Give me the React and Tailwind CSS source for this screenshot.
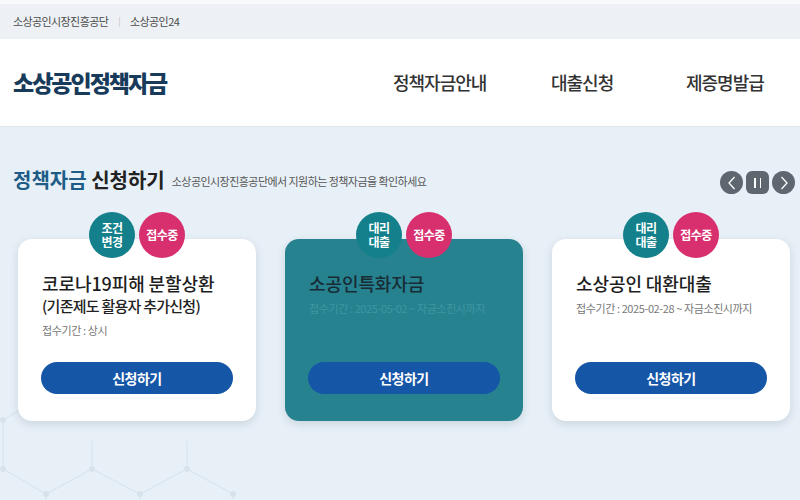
import React from "react";

const F = { fontFamily: "'Noto Sans CJK KR', 'Noto Sans', sans-serif" };

function Badges({ first }) {
  return (
    <div className="relative z-10 flex h-[46px] gap-[4px]">
      <div className="flex h-[46px] w-[46px] flex-col items-center justify-center rounded-full bg-[#13808b] text-[12px] font-bold leading-[14px] tracking-[-0.5px] text-white">
        <span>{first[0]}</span>
        <span>{first[1]}</span>
      </div>
      <div className="flex h-[46px] w-[46px] items-center justify-center rounded-full bg-[#d8306f] text-[12px] font-bold tracking-[-0.5px] text-white">
        접수중
      </div>
    </div>
  );
}

function Card({ badge, dark, title, sub, date }) {
  return (
    <div className="flex w-[238px] flex-col items-center">
      <Badges first={badge} />
      <div
        className={
          "-mt-[19px] flex h-[182px] w-[238px] flex-col rounded-[14px] px-[23px] pt-[32px] pb-[27px] shadow-[0_3px_10px_rgba(40,70,100,0.16)] " +
          (dark ? "bg-[#26828f]" : "bg-white")
        }
      >
        <div
          className={
            "pl-[1px] text-[18px] font-medium leading-[24px] tracking-[-0.1px] " +
            (dark ? "text-[#182c36]" : "text-[#1e1e1e]")
          }
        >
          {title}
        </div>
        {sub && (
          <div className="pl-[1px] text-[15px] font-medium leading-[22px] tracking-[-0.75px] text-[#222]">
            {sub}
          </div>
        )}
        <div
          className={
            "mt-[3px] pl-[1px] text-[11px] leading-[20px] tracking-[-0.4px] " +
            (dark ? "text-[#3d97a3]" : "text-[#777]")
          }
        >
          {date}
        </div>
        <div className="mt-auto flex h-[32px] w-full items-center justify-center rounded-full bg-[#1556a6] text-[14px] font-bold tracking-[-0.5px] text-white">
          신청하기
        </div>
      </div>
    </div>
  );
}

export default function App() {
  return (
    <div style={F} className="relative h-[500px] w-[800px] overflow-hidden bg-[#e8f0f7]">
      <div className="h-[4px] bg-[#f7f9fa]" />
      <div className="flex h-[35px] items-center bg-[#edf1f5] pl-[13px] text-[11px] tracking-[-0.6px] text-[#4a4a4a]">
        <span>소상공인시장진흥공단</span>
        <span className="mx-[10px] text-[9px] text-[#c4c4c4]">|</span>
        <span>소상공인24</span>
      </div>
      <div className="flex h-[88px] items-center border-b border-[#dfe4e8] bg-white pl-[13px]">
        <div className="text-[23px] font-black tracking-[-2px] text-[#183b5c]">소상공인정책자금</div>
        <nav className="ml-auto flex text-[18px] font-medium tracking-[-1px] text-[#333]">
          <span className="w-[158px]">정책자금안내</span>
          <span className="w-[135px]">대출신청</span>
          <span className="w-[114px]">제증명발급</span>
        </nav>
      </div>

      <div className="relative">
        <svg className="absolute left-0 top-0" width="800" height="373" viewBox="0 127 800 373">
          <g stroke="#d9e5ee" strokeWidth="1.2" fill="none">
            <path d="M3 379 L60 345 M3 379 L3 428 L46 453 L92 428 L140 453 L187 428 L233 453 M46 453 L46 500 M140 453 L140 500 M233 453 L233 500 M92 428 L92 400 M187 428 L187 400" />
          </g>
          <g fill="#d6e3ec">
            <circle cx="3" cy="379" r="3" />
            <circle cx="3" cy="428" r="3" />
            <circle cx="92" cy="428" r="3" />
            <circle cx="187" cy="428" r="3" />
            <circle cx="46" cy="453" r="3" />
            <circle cx="140" cy="453" r="3" />
            <circle cx="233" cy="453" r="3" />
          </g>
        </svg>

        <div className="relative mt-[41px] flex h-[24px] items-center pl-[13px] pr-[5px]">
          <div className="text-[20px] font-bold tracking-[0px]">
            <span className="text-[#1d5c87]">정책자금</span>{" "}
            <span className="text-[#222]">신청하기</span>
          </div>
          <div className="ml-[7px] mt-[3px] text-[11px] tracking-[-0.55px] text-[#555]">
            소상공인시장진흥공단에서 지원하는 정책자금을 확인하세요
          </div>
          <div className="ml-auto mt-[5px] flex gap-[3px]">
            <div className="flex h-[23px] w-[23px] items-center justify-center rounded-full bg-[#5e6770]">
              <svg width="10" height="14" viewBox="0 0 10 14" fill="none" stroke="white" strokeWidth="1.3">
                <path d="M7.5 1 L2 7 L7.5 13" />
              </svg>
            </div>
            <div className="flex h-[23px] w-[23px] items-center justify-center gap-[4px] rounded-[6px] bg-[#5e6770]">
              <div className="h-[10px] w-[1.5px] bg-white" />
              <div className="h-[10px] w-[1.5px] bg-white" />
            </div>
            <div className="flex h-[23px] w-[23px] items-center justify-center rounded-full bg-[#5e6770]">
              <svg width="10" height="14" viewBox="0 0 10 14" fill="none" stroke="white" strokeWidth="1.3">
                <path d="M2.5 1 L8 7 L2.5 13" />
              </svg>
            </div>
          </div>
        </div>

        <div className="relative mt-[20px] flex gap-[29px] pl-[18px]">
          <Card
            badge={["조건", "변경"]}
            title="코로나19피해 분할상환"
            sub="(기존제도 활용자 추가신청)"
            date="접수기간 : 상시"
          />
          <Card
            badge={["대리", "대출"]}
            dark
            title="소공인특화자금"
            date="접수기간 : 2025-05-02 ~ 자금소진시까지"
          />
          <Card
            badge={["대리", "대출"]}
            title="소상공인 대환대출"
            date="접수기간 : 2025-02-28 ~ 자금소진시까지"
          />
        </div>
      </div>
    </div>
  );
}
